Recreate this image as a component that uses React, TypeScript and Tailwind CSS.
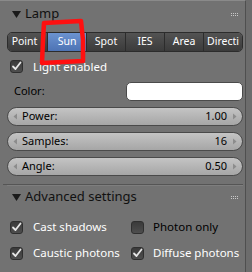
import React from 'react'

const font = { fontFamily: '"Noto Sans", "DejaVu Sans", sans-serif' }

function Grip() {
  return (
    <div className="grid grid-cols-4 gap-x-[1px] gap-y-[1px]">
      {Array.from({ length: 8 }).map((_, i) => (
        <div key={i} className="w-[1px] h-[1px] bg-[#c8c8c8]" />
      ))}
    </div>
  )
}

function Check({ on }: { on: boolean }) {
  return (
    <div className="w-[13px] h-[13px] shrink-0 rounded-[3px] border border-[#2f2f2f] bg-gradient-to-b from-[#3a3a3a] to-[#4e4e4e] flex items-center justify-center">
      {on && (
        <svg width="11" height="11" viewBox="0 0 11 11">
          <path d="M2 5.5 L4.5 8 L9.5 1.5" fill="none" stroke="#e6e6e6" strokeWidth="1.8" strokeLinecap="round" strokeLinejoin="round" />
        </svg>
      )}
    </div>
  )
}

function Slider({ label, value }: { label: string; value: string }) {
  return (
    <div className="h-[19px] rounded-full border border-[#4a4a4a] bg-gradient-to-b from-[#c4c4c4] to-[#a6a6a6] flex items-center text-[11px] text-black px-[5px]">
      <svg width="5" height="7" viewBox="0 0 5 7" className="mr-[4px]">
        <path d="M4 0.5 L0.5 3.5 L4 6.5 Z" fill="#8c8c8c" />
      </svg>
      <span>{label}</span>
      <span className="ml-auto mr-[5px]">{value}</span>
      <svg width="5" height="7" viewBox="0 0 5 7">
        <path d="M1 0.5 L4.5 3.5 L1 6.5 Z" fill="#8c8c8c" />
      </svg>
    </div>
  )
}

function Header({ title }: { title: string }) {
  return (
    <div className="flex items-center h-[22px]">
      <svg width="9" height="7" viewBox="0 0 9 7" className="ml-[5px] mr-[4px]">
        <path d="M0 0 L9 0 L4.5 7 Z" fill="#1a1a1a" />
      </svg>
      <span className="text-[13px] text-[#111]">{title}</span>
      <div className="ml-auto mr-[5px]">
        <Grip />
      </div>
    </div>
  )
}

export default function App() {
  const tabs = ['Point', 'Sun', 'Spot', 'IES', 'Area', 'Directi']
  return (
    <div className="relative w-[252px] h-[272px] bg-[#727272] flex overflow-hidden" style={font}>
      <div className="w-[246px] border-r border-[#4f4f4f] border-t border-t-[#8a8a8a] pl-[7px] pr-[2px] flex flex-col">
        <div className="mt-[2px]">
          <Header title="Lamp" />
        </div>
        <div className="mt-[7px] h-[20px] grid grid-cols-6 rounded-[5px] border border-[#2c2c2c] overflow-hidden text-[10.5px] text-white">
          {tabs.map((t, i) => (
            <div
              key={t}
              className={
                t === 'Sun'
                  ? 'flex items-center justify-center bg-gradient-to-b from-[#6c93d0] to-[#4d73b4] border-l border-[#2c2c2c]'
                  : i === 0
                  ? 'flex items-center justify-center pr-[6px] bg-gradient-to-b from-[#535353] to-[#3b3b3b] whitespace-nowrap'
                  : 'flex items-center justify-center bg-gradient-to-b from-[#535353] to-[#3b3b3b] border-l border-[#2c2c2c] overflow-hidden whitespace-nowrap'
              }
            >
              {t}
            </div>
          ))}
        </div>
        <div className="mt-[6px] h-[17px] flex items-center ml-[3px] gap-[10px] text-[11.5px] text-white">
          <Check on />
          <span>Light enabled</span>
        </div>
        <div className="mt-[7px] h-[19px] flex items-center text-[11px] text-black">
          <span className="w-[119px] pl-[7px]">Color:</span>
          <div className="flex-1 h-[19px] rounded-[5px] border border-[#4a4a4a] bg-white" />
        </div>
        <div className="mt-[6px] flex flex-col gap-[6px]">
          <Slider label="Power:" value="1.00" />
          <Slider label="Samples:" value="16" />
          <Slider label="Angle:" value="0.50" />
        </div>
        <div className="mt-[8px] -ml-[4px] h-[1px] bg-[#555]" />
        <div className="border-t border-[#7e7e7e]">
          <Header title="Advanced settings" />
        </div>
        <div className="mt-[8px] grid grid-cols-2 gap-y-[4px] text-[11.5px] whitespace-nowrap">
          <div className="h-[22px] flex items-center ml-[3px] gap-[10px] text-white">
            <Check on />
            <span>Cast shadows</span>
          </div>
          <div className="h-[22px] flex items-center ml-[6px] gap-[9px] text-black">
            <Check on={false} />
            <span>Photon only</span>
          </div>
          <div className="h-[22px] flex items-center ml-[3px] gap-[10px] text-white">
            <Check on />
            <span>Caustic photons</span>
          </div>
          <div className="h-[22px] flex items-center ml-[6px] gap-[9px] text-white">
            <Check on />
            <span>Diffuse photons</span>
          </div>
        </div>
      </div>
      <div className="flex-1 bg-[#6c6c6c]" />
      <svg className="absolute left-0 top-0 pointer-events-none" width="252" height="272">
        <path d="M44 23 L81 21 L83 40 L83 61 L42 63 L43 40 Z" fill="none" stroke="#ff1010" strokeWidth="4.5" strokeLinejoin="round" />
      </svg>
    </div>
  )
}
